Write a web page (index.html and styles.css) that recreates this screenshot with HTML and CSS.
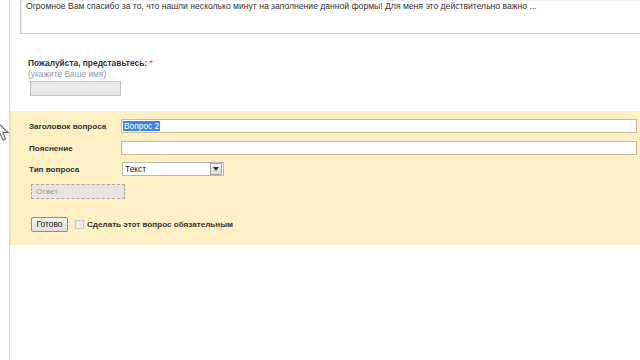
FILE: index.html
```html
<!DOCTYPE html>
<html>
<head>
<meta charset="utf-8">
<link rel="stylesheet" href="styles.css">
</head>
<body>
<div class="page">
  <div class="intro">Огромное Вам спасибо за то, что нашли несколько минут на заполнение данной формы! Для меня это действительно важно ...</div>
  <div class="name-block">
    <div class="q-title">Пожалуйста, представьтесь: <span class="req">*</span></div>
    <div class="q-hint">(укажите Ваше имя)</div>
    <div class="name-input"></div>
  </div>
  <div class="editor">
    <div class="row">
      <div class="lbl">Заголовок вопроса</div>
      <div class="field"><span class="sel">Вопрос 2</span></div>
    </div>
    <div class="row">
      <div class="lbl">Пояснение</div>
      <div class="field"></div>
    </div>
    <div class="row">
      <div class="lbl">Тип вопроса</div>
      <div class="select"><span class="sel-text">Текст</span><span class="sel-btn"><svg width="6" height="4" viewBox="0 0 6 4"><path d="M0 0H6L3 4Z" fill="#333"/></svg></span></div>
    </div>
    <div class="answer">Ответ</div>
    <div class="actions">
      <div class="btn">Готово</div>
      <div class="chk"></div>
      <div class="chk-lbl">Сделать этот вопрос обязательным</div>
    </div>
  </div>
</div>
<svg class="cursor" width="12" height="22" viewBox="0 0 12 22"><path d="M-4 1 L-4 17 L0 13.5 L3 20 L5.5 19 L2.8 12.5 L8 12.5 Z" fill="#fff" stroke="#666" stroke-width="1.1"/></svg>
</body>
</html>
```
FILE: styles.css
```css
html, body {
  margin: 0;
  padding: 0;
  background: #fff;
  width: 640px;
  height: 360px;
  overflow: hidden;
  font-family: "Liberation Sans", Arial, sans-serif;
  position: relative;
}
.page {
  margin-left: 9px;
  border-left: 1px solid #d6d6d6;
  height: 360px;
  box-sizing: border-box;
}
.intro {
  margin-left: 10px;
  border: 1px solid #cfcfcf;
  border-top: none;
  border-right: none;
  box-shadow: inset 1px 1px 1px #eee;
  font-size: 8.6px;
  color: #333;
  padding: 1px 0 0 5px;
  line-height: 10px;
  box-sizing: border-box;
  height: 34px;
}
.name-block {
  padding: 24px 0 0 18px;
  height: 77px;
  box-sizing: border-box;
}
.q-title {
  font-size: 8.4px;
  font-weight: bold;
  color: #333;
  line-height: 11px;
}
.req { color: #c33; font-weight: normal; }
.q-hint {
  font-size: 8.4px;
  color: #999;
  line-height: 10px;
}
.name-input {
  margin: 2px 0 0 2px;
  width: 89px;
  height: 13px;
  background: #e9e9e9;
  border: 1px solid #c4c4c4;
}
.editor {
  background: #fdf0c5;
  border-left: 1px solid #f0e0a8;
  height: 134px;
  padding: 8px 3px 0 18px;
  box-sizing: border-box;
}
.row {
  display: flex;
  align-items: center;
  height: 14px;
  margin-bottom: 8px;
}
.row:nth-child(2) { margin-bottom: 7px; }
.lbl {
  width: 92px;
  font-size: 8.1px;
  font-weight: bold;
  color: #333;
}
.field {
  flex: 1;
  height: 14px;
  box-sizing: border-box;
  background: #fff;
  border: 1px solid #cdbd8c;
  font-size: 8.4px;
  line-height: 12px;
  padding-left: 1px;
}
.sel {
  background: #3a86e0;
  color: #fff;
  padding: 0 1px;
}
.select {
  margin-left: 1px;
  width: 102px;
  height: 14px;
  box-sizing: border-box;
  border: 1px solid #b9b9b9;
  background: #fff;
  display: flex;
  align-items: center;
  justify-content: space-between;
  font-size: 8.4px;
  color: #222;
}
.sel-text { padding-left: 2px; }
.sel-btn {
  width: 10px;
  height: 10px;
  margin-right: 1px;
  border: 1px solid #aaa;
  background: linear-gradient(#f4f4f4, #dcdcdc);
  display: flex;
  align-items: center;
  justify-content: center;
}
.answer {
  margin: 3px 0 0 2px;
  width: 94px;
  height: 15px;
  box-sizing: border-box;
  border: 1px dashed #a8a8a0;
  background: #e9e6df;
  font-size: 8px;
  color: #999;
  padding-left: 4px;
  line-height: 13px;
}
.actions {
  display: flex;
  align-items: center;
  margin: 18px 0 0 2px;
}
.btn {
  width: 37px;
  height: 15px;
  box-sizing: border-box;
  border: 1px solid #8e8e8e;
  border-radius: 2px;
  background: linear-gradient(#f6f6f6, #dedede);
  font-size: 8.4px;
  color: #222;
  text-align: center;
  line-height: 13px;
}
.chk {
  width: 9px;
  height: 9px;
  margin-left: 7px;
  border: 1px solid #c8c8c8;
  background: #f0ede6;
  box-sizing: border-box;
}
.chk-lbl {
  margin-left: 3px;
  font-size: 8.1px;
  font-weight: bold;
  color: #333;
}
.cursor {
  position: absolute;
  left: 0;
  top: 120px;
}
```
